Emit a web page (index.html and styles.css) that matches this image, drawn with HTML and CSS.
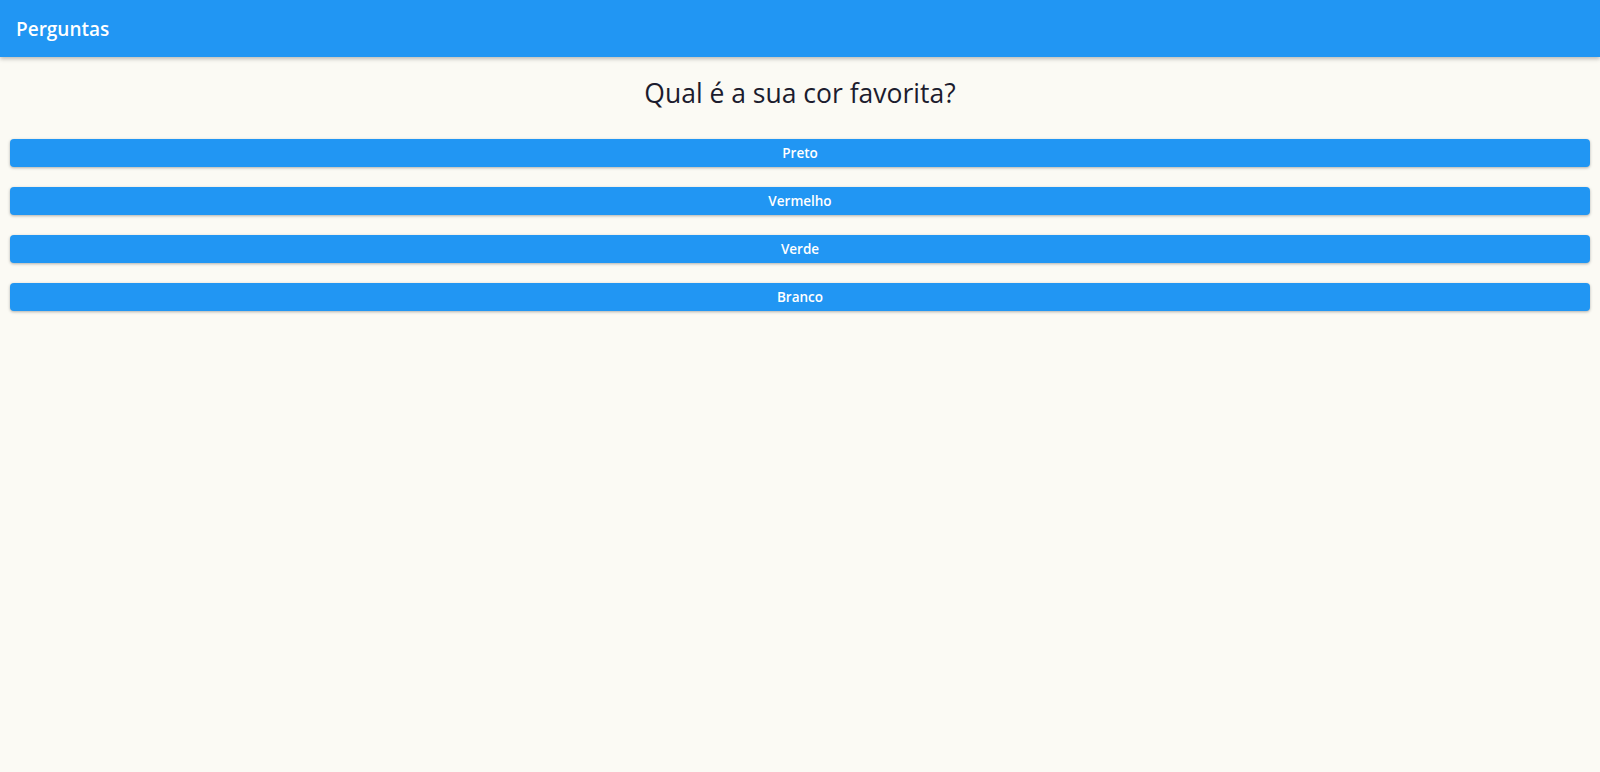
FILE: index.html
```html
<!DOCTYPE html>
<html lang="pt">
<head>
<meta charset="utf-8">
<title>Perguntas</title>
<link rel="stylesheet" href="styles.css">
</head>
<body>
<header class="appbar"><span class="appbar-title">Perguntas</span></header>
<main class="content">
  <h1 class="question">Qual é a sua cor favorita?</h1>
  <div class="answers">
    <button class="answer">Preto</button>
    <button class="answer">Vermelho</button>
    <button class="answer">Verde</button>
    <button class="answer">Branco</button>
  </div>
</main>
</body>
</html>
```
FILE: styles.css
```css
html, body {
  margin: 0;
  padding: 0;
  height: 100%;
}
body {
  background: #fbfaf4;
  font-family: "Open Sans", "Noto Sans", sans-serif;
}
.appbar {
  height: 57px;
  background: #2196f3;
  display: flex;
  align-items: center;
  padding: 0 16px;
  box-shadow: 0 2px 4px rgba(0,0,0,0.25);
}
.appbar-title {
  color: #fff;
  font-size: 19px;
  font-weight: 600;
}
.content {
  padding: 0 10px;
}
.question {
  margin: 0;
  padding-top: 18px;
  height: 64px;
  box-sizing: border-box;
  text-align: center;
  font-size: 26.5px;
  font-weight: 400;
  color: #1c1c2e;
  line-height: 36px;
}
.answers {
  display: flex;
  flex-direction: column;
  gap: 20px;
  padding-top: 18px;
}
.answer {
  height: 28px;
  border: none;
  border-radius: 4px;
  background: #2196f3;
  color: #fff;
  font-family: inherit;
  font-size: 13.5px;
  font-weight: 600;
  box-shadow: 0 1px 3px rgba(0,0,0,0.3);
  padding: 0;
}
```
